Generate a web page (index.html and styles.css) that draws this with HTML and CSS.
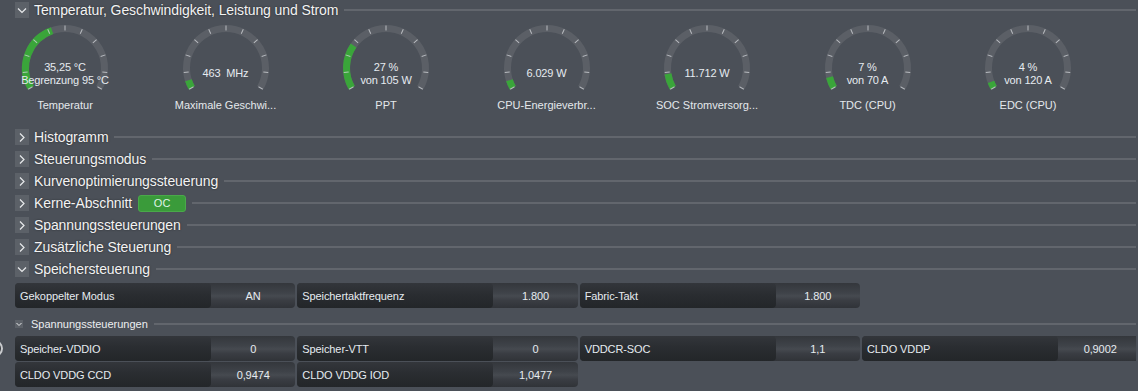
FILE: index.html
```html
<!DOCTYPE html>
<html lang="de">
<head>
<meta charset="utf-8">
<title>Ryzen Master</title>
<link rel="stylesheet" href="styles.css">
</head>
<body>
<svg class="defs" width="0" height="0" aria-hidden="true">
  <defs>
    <path id="arc" d="M 30.79 68.75 A 39.5 39.5 0 1 1 99.21 68.75"/>
    <g id="ticks">
      <line x1="65" y1="11.5" x2="65" y2="6.5" transform="rotate(-120 65 49)"/>
      <line x1="65" y1="11.5" x2="65" y2="6.5" transform="rotate(-96 65 49)"/>
      <line x1="65" y1="11.5" x2="65" y2="6.5" transform="rotate(-72 65 49)"/>
      <line x1="65" y1="11.5" x2="65" y2="6.5" transform="rotate(-48 65 49)"/>
      <line x1="65" y1="11.5" x2="65" y2="6.5" transform="rotate(-24 65 49)"/>
      <line x1="65" y1="11.5" x2="65" y2="6.5"/>
      <line x1="65" y1="11.5" x2="65" y2="6.5" transform="rotate(24 65 49)"/>
      <line x1="65" y1="11.5" x2="65" y2="6.5" transform="rotate(48 65 49)"/>
      <line x1="65" y1="11.5" x2="65" y2="6.5" transform="rotate(72 65 49)"/>
      <line x1="65" y1="11.5" x2="65" y2="6.5" transform="rotate(96 65 49)"/>
      <line x1="65" y1="11.5" x2="65" y2="6.5" transform="rotate(120 65 49)"/>
    </g>
  </defs>
</svg>

<div class="sec">
  <span class="chev"><svg width="14" height="16" viewBox="0 0 14 16"><polyline points="3,6.5 7,10.5 11,6.5"/></svg></span>
  <span class="stitle">Temperatur, Geschwindigkeit, Leistung und Strom</span>
  <span class="rule"></span>
</div>

<div class="gauges">
  <div class="gauge">
    <svg class="dial" width="130" height="79" viewBox="0 0 130 79">
      <use href="#arc" class="track"/>
      <path class="fill" d="M 30.79 68.75 A 39.5 39.5 0 1 1 99.21 68.75" pathLength="100" stroke-dasharray="42 100"/>
      <use href="#ticks" class="ticks"/>
    </svg>
    <div class="readout"><span>35,25 °C</span><span>Begrenzung 95 °C</span></div>
    <div class="glabel">Temperatur</div>
  </div>
  <div class="gauge">
    <svg class="dial" width="130" height="79" viewBox="0 0 130 79">
      <use href="#arc" class="track"/>
      <path class="fill" d="M 30.79 68.75 A 39.5 39.5 0 1 1 99.21 68.75" pathLength="100" stroke-dasharray="5 100"/>
      <use href="#ticks" class="ticks"/>
    </svg>
    <div class="readout"><span class="pre">463  MHz</span></div>
    <div class="glabel">Maximale Geschwi...</div>
  </div>
  <div class="gauge">
    <svg class="dial" width="130" height="79" viewBox="0 0 130 79">
      <use href="#arc" class="track"/>
      <path class="fill" d="M 30.79 68.75 A 39.5 39.5 0 1 1 99.21 68.75" pathLength="100" stroke-dasharray="27 100"/>
      <use href="#ticks" class="ticks"/>
    </svg>
    <div class="readout"><span>27 %</span><span>von 105 W</span></div>
    <div class="glabel">PPT</div>
  </div>
  <div class="gauge">
    <svg class="dial" width="130" height="79" viewBox="0 0 130 79">
      <use href="#arc" class="track"/>
      <path class="fill" d="M 30.79 68.75 A 39.5 39.5 0 1 1 99.21 68.75" pathLength="100" stroke-dasharray="5 100"/>
      <use href="#ticks" class="ticks"/>
    </svg>
    <div class="readout"><span>6.029 W</span></div>
    <div class="glabel">CPU-Energieverbr...</div>
  </div>
  <div class="gauge">
    <svg class="dial" width="130" height="79" viewBox="0 0 130 79">
      <use href="#arc" class="track"/>
      <path class="fill" d="M 30.79 68.75 A 39.5 39.5 0 1 1 99.21 68.75" pathLength="100" stroke-dasharray="9 100"/>
      <use href="#ticks" class="ticks"/>
    </svg>
    <div class="readout"><span>11.712 W</span></div>
    <div class="glabel">SOC Stromversorg...</div>
  </div>
  <div class="gauge">
    <svg class="dial" width="130" height="79" viewBox="0 0 130 79">
      <use href="#arc" class="track"/>
      <path class="fill" d="M 30.79 68.75 A 39.5 39.5 0 1 1 99.21 68.75" pathLength="100" stroke-dasharray="7 100"/>
      <use href="#ticks" class="ticks"/>
    </svg>
    <div class="readout"><span>7 %</span><span>von 70 A</span></div>
    <div class="glabel">TDC (CPU)</div>
  </div>
  <div class="gauge">
    <svg class="dial" width="130" height="79" viewBox="0 0 130 79">
      <use href="#arc" class="track"/>
      <path class="fill" d="M 30.79 68.75 A 39.5 39.5 0 1 1 99.21 68.75" pathLength="100" stroke-dasharray="4 100"/>
      <use href="#ticks" class="ticks"/>
    </svg>
    <div class="readout"><span>4 %</span><span>von 120 A</span></div>
    <div class="glabel">EDC (CPU)</div>
  </div>
</div>

<div class="rows">
  <div class="sec">
    <span class="chev"><svg width="14" height="16" viewBox="0 0 14 16"><polyline points="5,4.5 9,8.5 5,12.5"/></svg></span>
    <span class="stitle">Histogramm</span><span class="rule"></span>
  </div>
  <div class="sec">
    <span class="chev"><svg width="14" height="16" viewBox="0 0 14 16"><polyline points="5,4.5 9,8.5 5,12.5"/></svg></span>
    <span class="stitle">Steuerungsmodus</span><span class="rule"></span>
  </div>
  <div class="sec">
    <span class="chev"><svg width="14" height="16" viewBox="0 0 14 16"><polyline points="5,4.5 9,8.5 5,12.5"/></svg></span>
    <span class="stitle">Kurvenoptimierungssteuerung</span><span class="rule"></span>
  </div>
  <div class="sec">
    <span class="chev"><svg width="14" height="16" viewBox="0 0 14 16"><polyline points="5,4.5 9,8.5 5,12.5"/></svg></span>
    <span class="stitle">Kerne-Abschnitt</span><span class="badge">OC</span><span class="rule"></span>
  </div>
  <div class="sec">
    <span class="chev"><svg width="14" height="16" viewBox="0 0 14 16"><polyline points="5,4.5 9,8.5 5,12.5"/></svg></span>
    <span class="stitle">Spannungssteuerungen</span><span class="rule"></span>
  </div>
  <div class="sec">
    <span class="chev"><svg width="14" height="16" viewBox="0 0 14 16"><polyline points="5,4.5 9,8.5 5,12.5"/></svg></span>
    <span class="stitle">Zusätzliche Steuerung</span><span class="rule"></span>
  </div>
  <div class="sec">
    <span class="chev"><svg width="14" height="16" viewBox="0 0 14 16"><polyline points="3,6.5 7,10.5 11,6.5"/></svg></span>
    <span class="stitle">Speichersteuerung</span><span class="rule"></span>
  </div>
</div>

<div class="fields first">
  <div class="grid">
    <div class="field"><span class="flabel">Gekoppelter Modus</span><span class="fval">AN</span></div>
    <div class="field"><span class="flabel">Speichertaktfrequenz</span><span class="fval">1.800</span></div>
    <div class="field"><span class="flabel">Fabric-Takt</span><span class="fval">1.800</span></div>
  </div>
</div>

<div class="subsec">
  <span class="minichev"><svg width="8" height="8" viewBox="0 0 8 8"><polyline points="1.5,3 4,5.5 6.5,3"/></svg></span>
  <span class="subtitle">Spannungssteuerungen</span>
  <span class="rule"></span>
</div>

<div class="fields second">
  <span class="edge-icon"></span>
  <div class="grid">
    <div class="field"><span class="flabel">Speicher-VDDIO</span><span class="fval">0</span></div>
    <div class="field"><span class="flabel">Speicher-VTT</span><span class="fval">0</span></div>
    <div class="field"><span class="flabel">VDDCR-SOC</span><span class="fval">1,1</span></div>
    <div class="field"><span class="flabel">CLDO VDDP</span><span class="fval">0,9002</span></div>
    <div class="field"><span class="flabel">CLDO VDDG CCD</span><span class="fval">0,9474</span></div>
    <div class="field"><span class="flabel">CLDO VDDG IOD</span><span class="fval">1,0477</span></div>
  </div>
</div>
</body>
</html>
```

FILE: styles.css
```css
html, body {
  margin: 0;
  padding: 0;
}

body {
  width: 1138px;
  height: 391px;
  overflow: hidden;
  position: relative;
  background: #4b5058;
  font-family: "Liberation Sans", Arial, sans-serif;
  color: #e6ebf0;
}

.defs {
  position: absolute;
  width: 0;
  height: 0;
}

/* section header rows */
.sec {
  display: flex;
  align-items: center;
  height: 22px;
  padding-left: 15px;
  padding-right: 2px;
}

body > .sec:first-of-type {
  height: 19px;
}

.chev {
  width: 14px;
  height: 16px;
  flex: none;
  background: #5c6168;
  margin-right: 5px;
  display: flex;
}

.chev polyline,
.minichev polyline {
  fill: none;
  stroke: #e8eaec;
  stroke-width: 1.2;
}

.stitle {
  font-size: 14px;
  letter-spacing: -0.1px;
  color: #f3f3f3;
  white-space: nowrap;
  text-shadow: 0 0 2px rgba(0, 0, 0, 0.55);
}

.rule {
  flex: 1;
  height: 2px;
  margin-left: 6px;
  background: #62666d;
}

.badge {
  width: 48px;
  height: 17px;
  margin-left: 6px;
  box-sizing: border-box;
  border: 1px solid #4aa94a;
  border-radius: 3px;
  background: #3a9b3a;
  color: #dff3e6;
  font-size: 11px;
  display: flex;
  align-items: center;
  justify-content: center;
}

/* gauges */
.gauges {
  display: flex;
  column-gap: 30.5px;
  height: 107px;
}

.gauge {
  position: relative;
  width: 130px;
  flex: none;
}

.dial {
  display: block;
}

.track,
.fill {
  fill: none;
  stroke-width: 7;
}

.track {
  stroke: #5b5f66;
}

.fill {
  stroke: #3aa53a;
}

.ticks {
  stroke: rgba(215, 218, 222, 0.75);
  stroke-width: 1;
}

.readout {
  position: absolute;
  left: 0;
  right: 0;
  top: 41.5px;
  height: 26px;
  display: flex;
  flex-direction: column;
  align-items: center;
  justify-content: center;
  font-size: 11px;
  line-height: 13px;
  letter-spacing: -0.15px;
  white-space: nowrap;
}

.pre {
  white-space: pre;
}

.glabel {
  font-size: 11px;
  line-height: 14px;
  text-align: center;
  white-space: nowrap;
  color: #e4e8ec;
}

/* value fields */
.fields {
  position: relative;
  margin-left: 15px;
  width: 1121px;
  overflow: hidden;
}

.fields.first {
  margin-top: 3px;
}

.fields.second {
  margin-top: 3px;
  overflow: visible;
}

.fields.second .grid {
  width: 1121px;
  overflow: hidden;
}

.grid {
  display: grid;
  grid-template-columns: repeat(4, 280.33px);
  column-gap: 2px;
  row-gap: 1px;
}

.field {
  display: flex;
  height: 25px;
  border-radius: 4px;
  background: linear-gradient(to bottom, #34373c 0%, #3f4349 40%, #464a50 52%, #3a3d43 70%, #303338 100%);
  font-size: 11px;
  letter-spacing: -0.1px;
  white-space: nowrap;
}

.flabel {
  width: 196px;
  flex: none;
  box-sizing: border-box;
  padding-left: 5px;
  border-radius: 4px;
  background: linear-gradient(to bottom, #33363b 0%, #2a2d31 45%, #232629 100%);
  display: flex;
  align-items: center;
}

.fval {
  flex: 1;
  display: flex;
  align-items: center;
  justify-content: center;
}

/* sub section */
.subsec {
  display: flex;
  align-items: center;
  height: 18px;
  margin-top: 7px;
  padding-left: 15px;
  padding-right: 2px;
}

.minichev {
  width: 8px;
  height: 8px;
  flex: none;
  background: #5c6168;
  margin-right: 8px;
  display: flex;
}

.minichev polyline {
  stroke-width: 1;
}

.subtitle {
  font-size: 11px;
  color: #eceef0;
  white-space: nowrap;
}

.edge-icon {
  position: absolute;
  left: -29px;
  top: 4px;
  width: 13px;
  height: 13px;
  border: 2px solid #c9cbce;
  border-radius: 50%;
  background: #3a3d42;
}
```
